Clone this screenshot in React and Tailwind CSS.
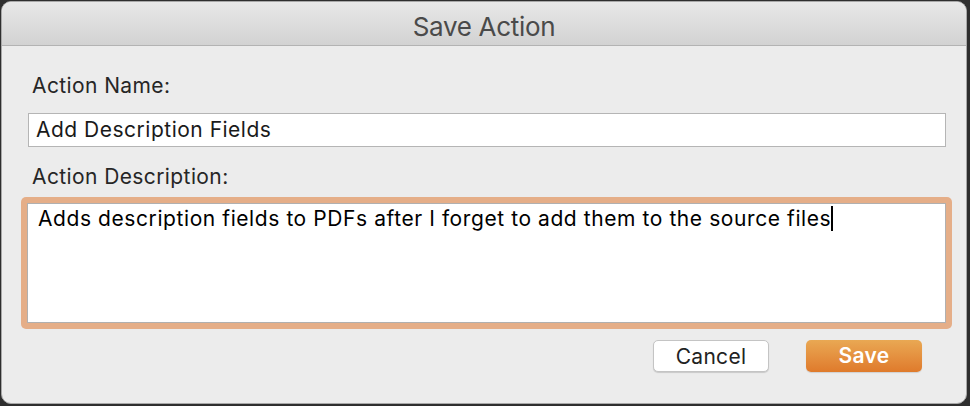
const App = () => {
  return (
    <div className="w-[970px] h-[406px] bg-[#2e2e2e] overflow-hidden" style={{ fontFamily: 'Inter, "Liberation Sans", Arial, sans-serif' }}>
      <div className="w-[966px] h-[403px] ml-px mt-px flex flex-col rounded-[10px] overflow-hidden bg-[#ececec] border border-[#a8a8a8]">
        {/* title bar */}
        <div className="h-[44px] shrink-0 flex items-center justify-center pt-[5px] bg-gradient-to-b from-[#e8e8e8] to-[#d2d2d2] border-b border-[#b3b3b3]">
          <span className="text-[26px] text-[#4a4a4a] tracking-[-0.3px]">Save Action</span>
        </div>

        <div className="flex flex-col pl-[26px] pr-[20px]">
          <label className="mt-[29px] ml-[4px] text-[21px] leading-[22px] tracking-[0.4px] text-[#262626]">Action Name:</label>
          <div className="mt-[16px] h-[34px] bg-white border border-[#b5b5b5] flex items-center px-[7px] text-[21px] tracking-[0.5px] text-[#1a1a1a]">
            Add Description Fields
          </div>
          <label className="mt-[19px] ml-[4px] text-[21px] leading-[22px] tracking-[0.4px] text-[#262626]">Action Description:</label>
          <div className="mt-[9px] -ml-[7px] -mr-[6px] p-[6px] rounded-[5px] bg-[#e5ae88]">
            <div className="h-[120px] bg-white border border-[#b0b0b0] px-[10px] pt-[2px] text-[21px] leading-[26px] tracking-[0.58px] text-black">
              Adds description fields to PDFs after I forget to add them to the source files
              <span className="inline-block w-[2px] h-[25px] bg-black align-middle -mt-[3px]"></span>
            </div>
          </div>
          <div className="mt-[11px] flex justify-end gap-[37px] pr-[24px]">
            <button className="w-[116px] h-[32px] bg-white border border-[#c4c4c4] rounded-[5px] shadow-[0_1px_1px_rgba(0,0,0,0.15)] text-[21px] tracking-[0.3px] text-[#222]">
              Cancel
            </button>
            <button className="w-[116px] h-[32px] rounded-[5px] bg-gradient-to-b from-[#e9a853] to-[#df7a2b] text-[21px] font-semibold tracking-[0.3px] text-white shadow-[0_1px_1px_rgba(0,0,0,0.12)]">
              Save
            </button>
          </div>
        </div>
      </div>
    </div>
  );
};
export default App;
